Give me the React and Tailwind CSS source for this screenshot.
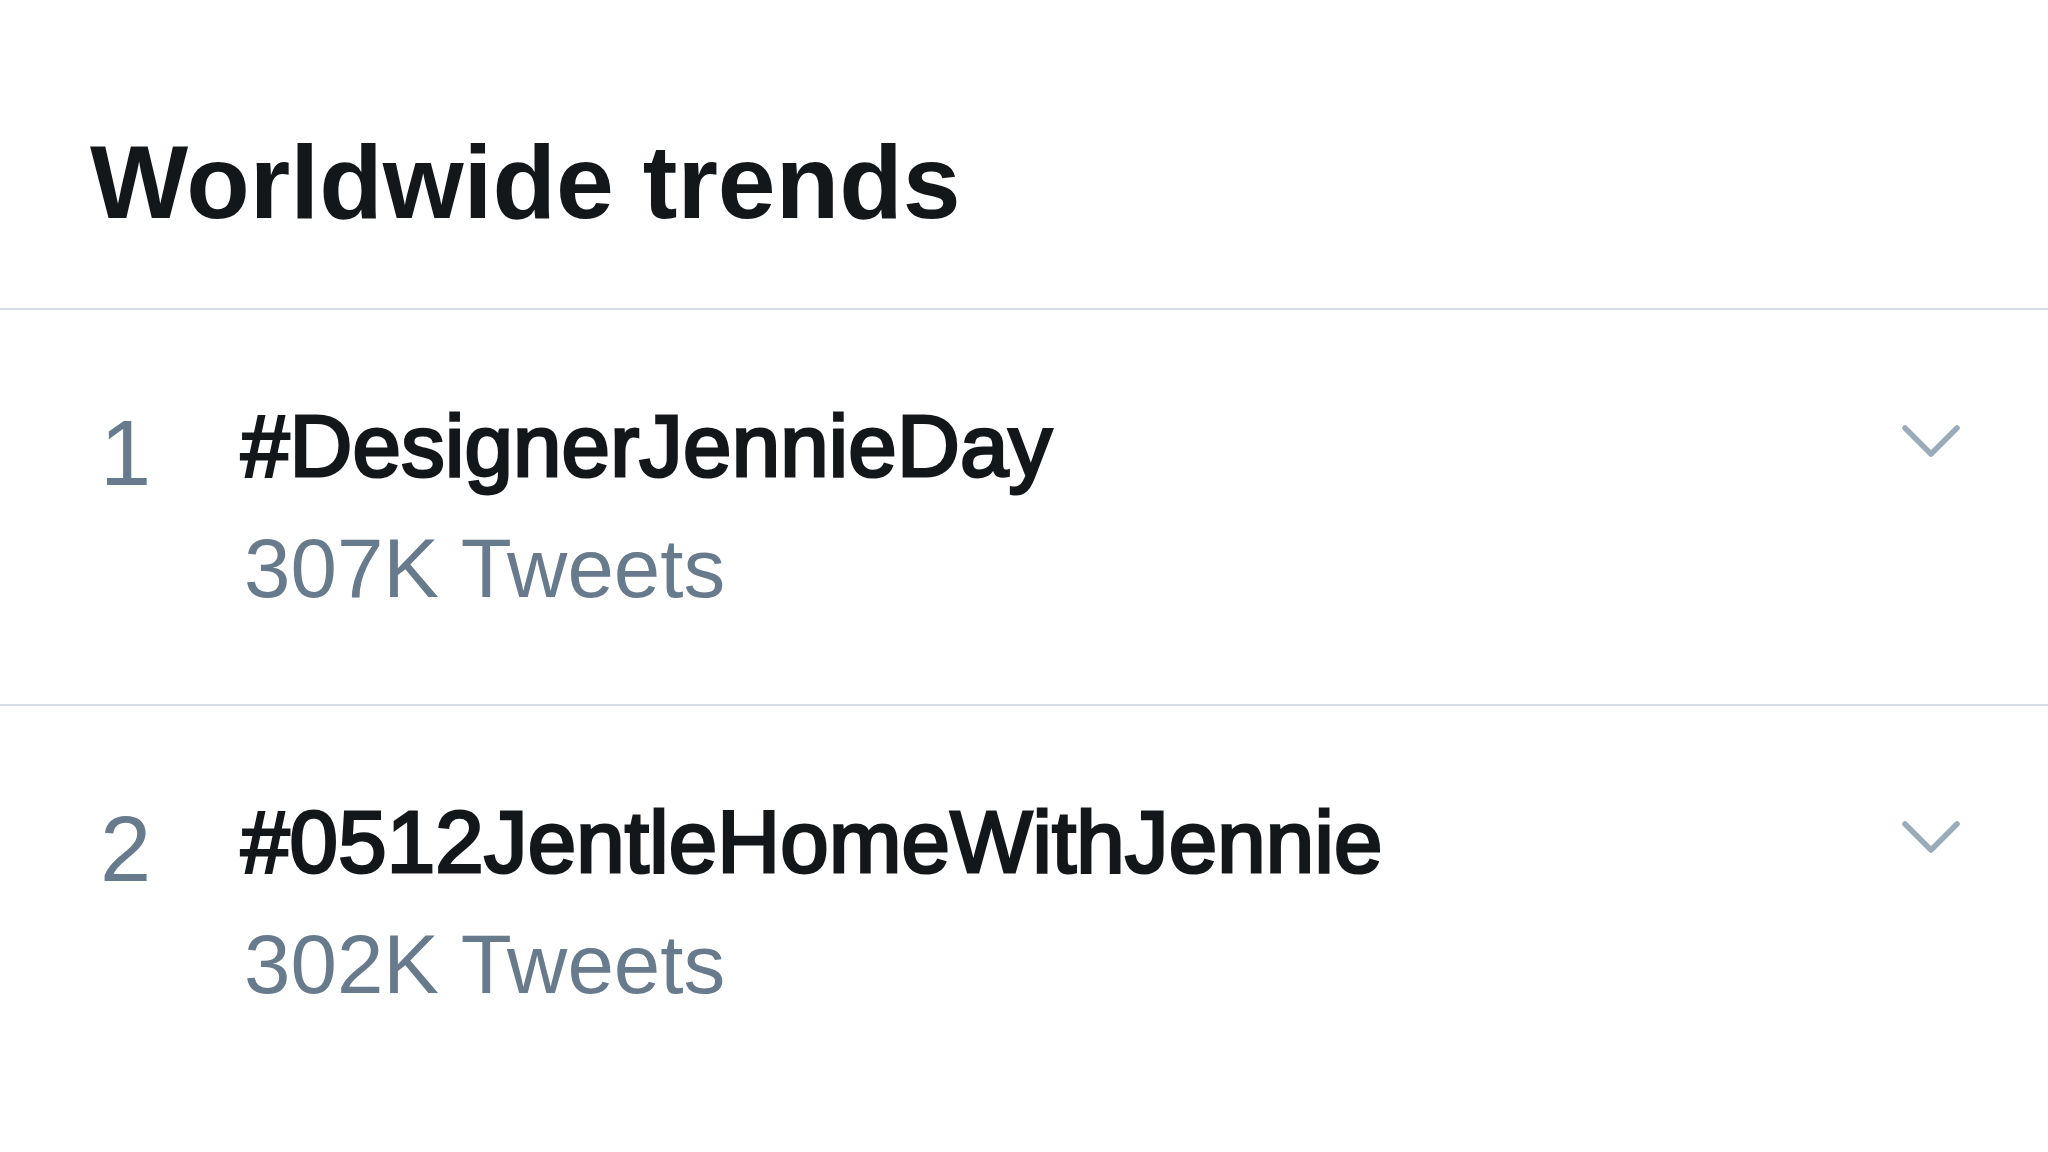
import React from "react";

const trends = [
  { rank: "1", tag: "#DesignerJennieDay", count: "307K Tweets" },
  { rank: "2", tag: "#0512JentleHomeWithJennie", count: "302K Tweets" },
];

function Chevron() {
  return (
    <svg width="62" height="40" viewBox="0 0 62 40" fill="none" className="block">
      <polyline
        points="5,6 31,32 57,6"
        stroke="#9aabb9"
        strokeWidth="5.5"
        strokeLinecap="round"
        strokeLinejoin="round"
      />
    </svg>
  );
}

export default function App() {
  return (
    <div
      className="w-[2048px] h-[1152px] bg-white overflow-hidden"
      style={{ fontFamily: '"Liberation Sans", Arial, sans-serif' }}
    >
      <div className="pt-[131px] pb-[74px] pl-[90px]">
        <h1 className="text-[104px] leading-[103px] font-bold text-[#14171a]">
          Worldwide trends
        </h1>
      </div>
      {trends.map((t) => (
        <div key={t.rank} className="border-t-2 border-[#d5dce4] h-[396px] flex">
          <div className="w-[241px] pl-[100px] pt-[97px] shrink-0">
            <div className="text-[92px] leading-[92px] text-[#687b8c]">{t.rank}</div>
          </div>
          <div className="flex-1 pt-[93px]">
            <div className="text-[87px] leading-[86px] font-normal text-[#14171a] tracking-[0.2px] [-webkit-text-stroke:3px_#14171a]">
              {t.tag}
            </div>
            <div className="mt-[38px] pl-[3px] text-[83.5px] leading-[82px] text-[#687b8c]">
              {t.count}
            </div>
          </div>
          <div className="pt-[112px] pr-[86px] shrink-0">
            <Chevron />
          </div>
        </div>
      ))}
    </div>
  );
}
